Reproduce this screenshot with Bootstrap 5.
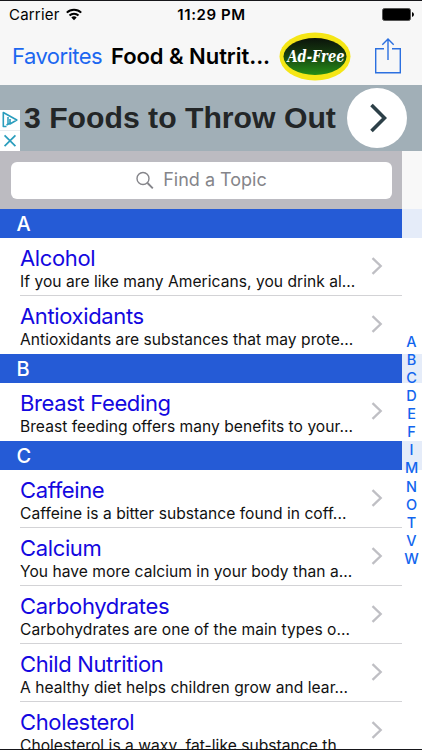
<!DOCTYPE html>
<html lang="en">
<head>
<meta charset="utf-8">
<meta name="viewport" content="width=device-width, initial-scale=1">
<title>Food &amp; Nutrition</title>
<link href="https://cdn.jsdelivr.net/npm/bootstrap@5.3.0/dist/css/bootstrap.min.css" rel="stylesheet">
<style>
  body { font-family: Inter, "Liberation Sans", sans-serif; color: #000; }
  .screen { width: 422px; height: 750px; background: #fff; border-top: 1px solid #17171b; border-bottom: 1px solid #17171b; }
  .top-area { height: 84px; background: #f7f7f7; }
  .status { height: 27px; padding: 0 8px 0 9px; font-size: 15px; line-height: 27px; }
  .status > div { flex: 1 1 0; }
  .carrier { letter-spacing: .2px; }
  .status-left { gap: 6px; }
  .clock { font-weight: 600; letter-spacing: .6px; }
  .titlebar { height: 57px; padding: 0 20px 0 12px; line-height: 57px; font-size: 22px; }
  .back-link { color: #1c67f0; letter-spacing: -.55px; width: 99px; }
  .page-title { font-weight: 600; letter-spacing: -.05px; width: 168px; white-space: nowrap; }
  .ad { height: 66px; background: #a1afb7; }
  .ad-tags { width: 20px; padding-top: 25px; }
  .ad-tags svg { display: block; background: #fff; }
  .ad-text { font: 700 30.2px/66px "Liberation Sans", Arial, sans-serif; color: #232627; width: 323px; padding-left: 4px; white-space: nowrap; }
  .ad-go { width: 60px; height: 60px; background: #fff; }
  .list-col { width: 402px; }
  .search-area { height: 58px; padding: 11px 10px 10px 11px; background: #bcbbc1; }
  .search-box { height: 37px; border-radius: 6px; background: #fff; color: #85858a; font-size: 18px; line-height: 34px; padding-bottom: 2px; gap: 9px; }
  .section-head { height: 29px; padding-left: 16.5px; background: #255bd6; color: #fff; font-weight: 500; font-size: 20px; line-height: 30px; }
  .topic { height: 58px; padding: 6px 19px 0 0; margin-left: 20px; border-bottom: 1px solid #d3d3d6; }
  .topic:last-child { border-bottom: 0; }
  .topic-name { font-size: 22px; line-height: 28px; letter-spacing: -.36px; color: #1408e0; }
  .topic-text { font-size: 15.6px; line-height: 20px; letter-spacing: .03px; white-space: nowrap; color: #111; }
  .chev { margin-top: 13px; }
  .index-col { width: 20px; background: #fff; }
  .index-top { height: 58px; background: #f8f8f8; }
  .index-tint { height: 29px; background: #e5ecf9; }
  .letters { top: 182px; left: 0; width: 19px; color: #1265ee; font-weight: 500; font-size: 14.5px; line-height: 18.06px; text-align: center; }
</style>
<script src="https://cdn.jsdelivr.net/npm/bootstrap@5.3.0/dist/js/bootstrap.bundle.min.js"></script>
</head>
<body class="overflow-hidden">
<div class="screen overflow-hidden d-flex flex-column">
  <header class="top-area flex-shrink-0">
    <div class="status d-flex align-items-center">
      <div class="status-left d-flex align-items-center"><span class="carrier">Carrier</span>
        <svg width="16" height="13" viewBox="0 0 16 13" fill="none" stroke="#000" stroke-width="2"><path d="M.8 4.6a10.3 10.3 0 0 1 14.4 0M3.5 7.5a6.4 6.4 0 0 1 9 0"/><path d="M8 12.2L5.3 9.5a3.9 3.9 0 0 1 5.4 0z" fill="#000" stroke="none"/></svg>
      </div>
      <div class="clock text-center">11:29 PM</div>
      <div class="d-flex justify-content-end">
        <svg width="32" height="13" viewBox="0 0 32 13"><rect x=".5" y=".5" width="28" height="12" rx="2" fill="#000" stroke="#555"/><path d="M30 4v5q2-.6 2-2.5T30 4z"/></svg>
      </div>
    </div>
    <div class="titlebar d-flex align-items-center">
      <a href="#" class="back-link text-decoration-none">Favorites</a>
      <div class="page-title">Food &amp; Nutrit...</div>
      <svg class="flex-shrink-0" width="72" height="49" viewBox="0 0 72 49">
        <defs><linearGradient id="green" x1="0" y1="0" x2="0" y2="1"><stop offset="0" stop-color="#0b130b"/><stop offset=".4" stop-color="#15380f"/><stop offset="1" stop-color="#258d16"/></linearGradient></defs>
        <ellipse cx="36" cy="24.5" rx="35.5" ry="24" fill="#f5e616"/>
        <ellipse cx="36" cy="24.5" rx="31.5" ry="18.5" fill="url(#green)"/>
        <text x="8.5" y="29.5" textLength="57" lengthAdjust="spacingAndGlyphs" font-family="DejaVu Serif, serif" font-style="italic" font-weight="700" font-size="17.5" fill="#fff">Ad-Free</text>
      </svg>
      <svg class="ms-auto" width="28" height="37" viewBox="0 0 28 37" fill="none" stroke="#2c70e0" stroke-width="1.4"><path d="M10 10.7H1.7v24h24.6v-24H18M14 22V1M8.3 6.7L14 1l5.7 5.7"/></svg>
    </div>
  </header>
  <div class="ad d-flex align-items-center flex-shrink-0">
    <div class="ad-tags align-self-start">
      <svg width="20" height="20" viewBox="0 0 20 20" fill="none" stroke="#2a9dbd" stroke-width="1.6" stroke-linejoin="round"><path d="M6.5 16.5H3.3v-14L16.8 10 10 14V9M6.5 15l3-1.5"/><path d="M8 7v7" stroke-width="1.5"/></svg>
      <svg class="border-top border-secondary-subtle" width="20" height="21" viewBox="0 0 20 21" stroke="#2a9dbd" stroke-width="1.8"><path d="M4.3 4.5l11.4 11.4M15.7 4.5L4.3 15.9"/></svg>
    </div>
    <div class="ad-text">3 Foods to Throw Out</div>
    <div class="ad-go rounded-circle d-flex align-items-center justify-content-center flex-shrink-0 ms-1">
      <svg width="20" height="30" viewBox="-2 0 20 30" fill="none" stroke="#2d4048" stroke-width="3.6"><path d="M2.5 2l13 13-13 13"/></svg>
    </div>
  </div>
  <div class="d-flex flex-grow-1 overflow-hidden">
    <main class="list-col flex-shrink-0">
      <div class="search-area"><div class="search-box d-flex align-items-center justify-content-center">
        <svg width="18" height="18" viewBox="0 0 18 18" fill="none" stroke="#85858a"><circle cx="7" cy="7.5" r="6" stroke-width="1.4"/><path d="M11.5 12l5.3 5.3" stroke-width="1.9"/></svg>
        <span>Find a Topic</span></div></div>
      <div id="topics"></div>
    </main>
    <aside class="index-col position-relative">
      <div class="index-top"></div>
      <div class="index-tint"></div>
      <div class="index-tint" style="margin-top:116px"></div>
      <div class="index-tint" style="margin-top:58px"></div>
      <div class="letters position-absolute">A<br>B<br>C<br>D<br>E<br>F<br>I<br>M<br>N<br>O<br>T<br>V<br>W</div>
    </aside>
  </div>
</div>
<script>
const sections = [
  ["A", [["Alcohol", "If you are like many Americans, you drink al..."], ["Antioxidants", "Antioxidants are substances that may prote..."]]],
  ["B", [["Breast Feeding", "Breast feeding offers many benefits to your..."]]],
  ["C", [["Caffeine", "Caffeine is a bitter substance found in coff..."], ["Calcium", "You have more calcium in your body than a..."], ["Carbohydrates", "Carbohydrates are one of the main types o..."], ["Child Nutrition", "A healthy diet helps children grow and lear..."], ["Cholesterol", "Cholesterol is a waxy, fat-like substance th..."]]]
];
const chevron = '<svg class="chev flex-shrink-0" width="12" height="18" viewBox="0 0 12 18" fill="none" stroke="#bfbfc4" stroke-width="2.3"><path d="M1.5 1.2L9.7 9l-8.2 7.8"/></svg>';
document.getElementById("topics").innerHTML = sections.map(([letter, topics]) =>
  `<section><div class="section-head">${letter}</div>` + topics.map(([name, text]) =>
    `<div class="topic d-flex justify-content-between"><div><div class="topic-name">${name}</div><div class="topic-text">${text}</div></div>${chevron}</div>`).join("") + "</section>").join("");
</script>
</body>
</html>
